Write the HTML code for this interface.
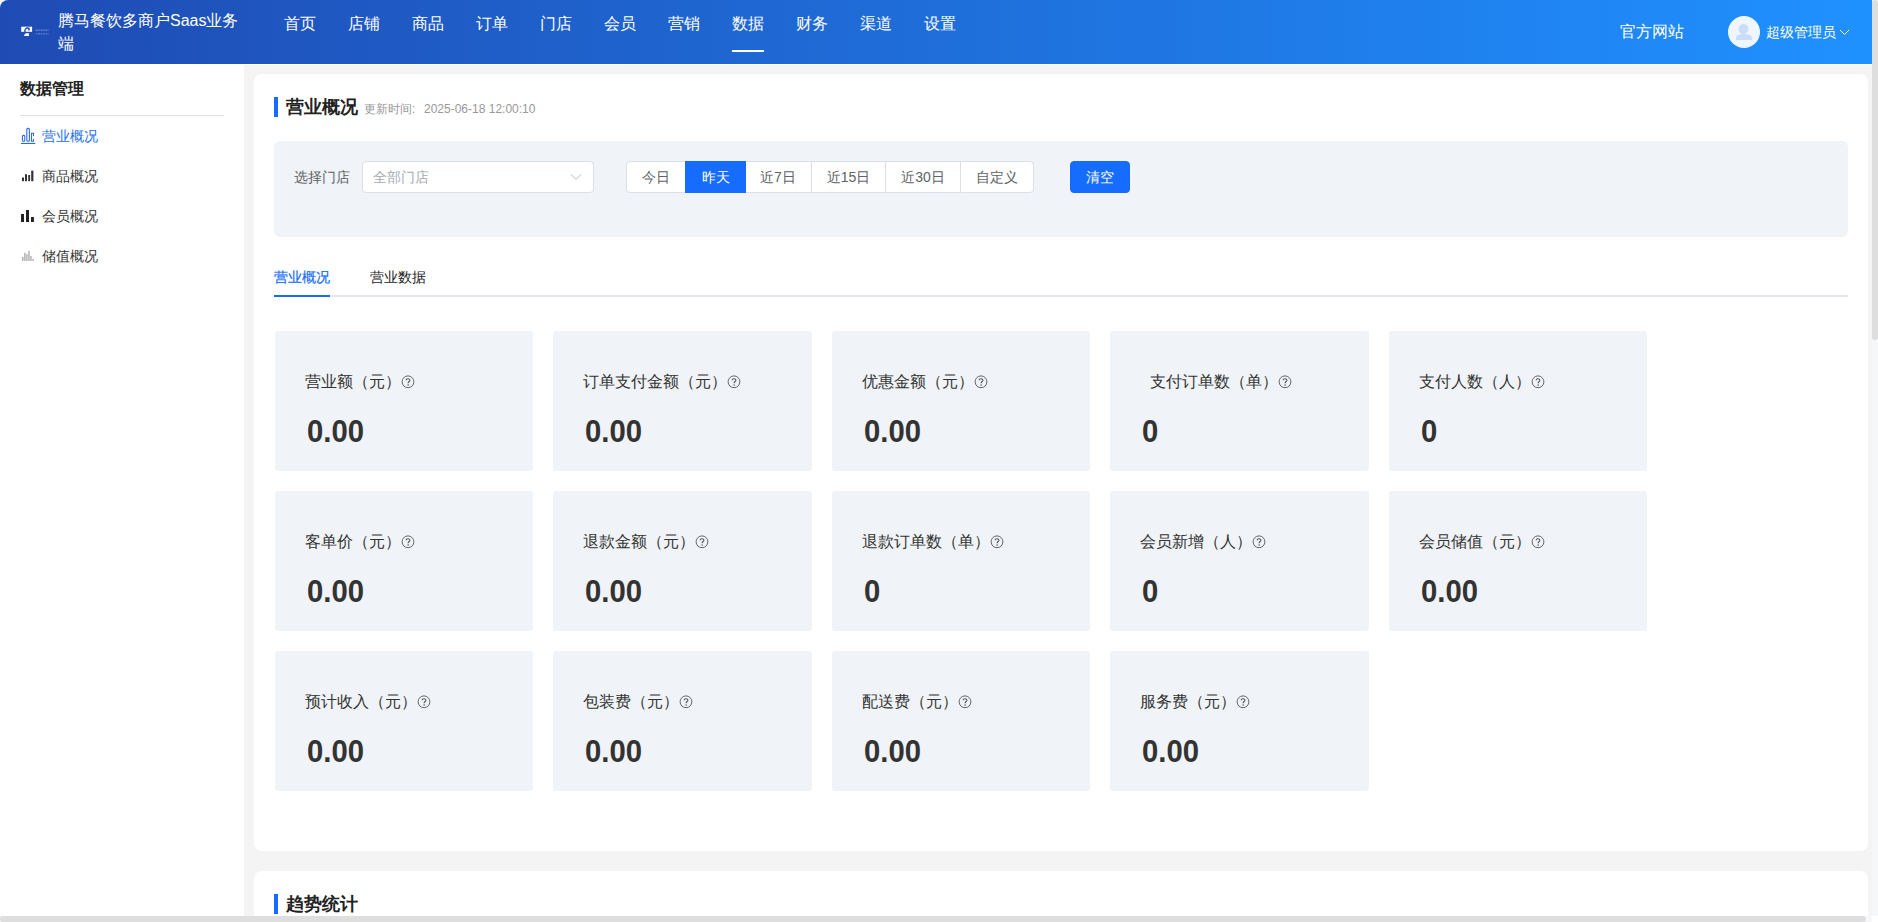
<!DOCTYPE html>
<html><head><meta charset="utf-8">
<style>
*{box-sizing:border-box;margin:0;padding:0}
html,body{width:1878px;height:922px;overflow:hidden;background:#fff;font-family:"Liberation Sans",sans-serif;color:#333}
.abs{position:absolute}
#hdr{position:absolute;left:0;top:0;width:1872px;height:64px;border-top-left-radius:8px;background:linear-gradient(to right,#1f4bb4,#1f91ff)}
#hdr .t{position:absolute;color:#fff;font-size:16px;line-height:16px;white-space:nowrap}
.nav{position:absolute;top:16px;color:#fff;font-size:16px;line-height:16px;white-space:nowrap}
#side{position:absolute;left:0;top:64px;width:244px;height:852px;background:#fff}
#gray{position:absolute;left:244px;top:65px;width:1628px;height:851px;background:#f4f4f4}
.panel{position:absolute;left:254px;width:1614px;background:#fff;border-radius:8px}
.menu{position:absolute;left:42px;font-size:14px;line-height:14px;color:#333;white-space:nowrap}
.card{position:absolute;width:258px;height:140px;background:#f0f3f7;border-radius:3px}
.card .l{position:absolute;left:30px;top:43px;font-size:16px;line-height:16px;color:#333;white-space:nowrap}
.card .v{position:absolute;left:31.5px;top:84px;font-size:32px;line-height:32px;font-weight:bold;color:#333;white-space:nowrap;transform:scaleX(0.915);transform-origin:0 0}
.q{display:inline-block;vertical-align:top;width:14px;height:16px;position:relative}
.q svg{position:absolute;left:0;top:1px}
.btn{position:absolute;top:161px;height:32px;font-size:14px;line-height:30px;color:#606266;text-align:center;border:1px solid #dcdfe6;background:#fff;white-space:nowrap}
</style></head><body>
<div id="hdr">
  <svg class="abs" style="left:20px;top:25px" width="30" height="12" viewBox="0 0 30 12">
    <rect x="1.2" y="1.7" width="10.9" height="5.1" fill="#fff"/>
    <path d="M5 7.5 C4.2 4.2 6.3 2.6 8.2 3 C9.4 3.3 9.6 4.7 8.4 5.4" stroke="#1f4bb4" stroke-width="1.4" fill="none"/>
    <path d="M3.2 1.8 L4.6 1.8 L3.6 5.5 L2.4 5.5 Z" fill="#1f4bb4" opacity=".0"/>
    <path d="M5.5 8.3 L9 8.3 L9 10.9 L4 10.9 L4 10.4 Z" fill="#fff"/>
    <path d="M15.6 5.3 H28.5" stroke="#fff" stroke-width="1.6" stroke-dasharray="2 .6 1.5 .8" opacity=".3"/>
    <path d="M16 8.7 H28.5" stroke="#fff" stroke-width="1.4" stroke-dasharray="1.4 .6 2 .7" opacity=".25"/>
  </svg>
  <div class="t" style="left:58px;top:13px">腾马餐饮多商户Saas业务</div>
  <div class="t" style="left:58px;top:36px">端</div>
  <div class="nav" style="left:284px">首页</div>
  <div class="nav" style="left:348px">店铺</div>
  <div class="nav" style="left:412px">商品</div>
  <div class="nav" style="left:476px">订单</div>
  <div class="nav" style="left:540px">门店</div>
  <div class="nav" style="left:604px">会员</div>
  <div class="nav" style="left:668px">营销</div>
  <div class="nav" style="left:732px">数据</div>
  <div class="nav" style="left:796px">财务</div>
  <div class="nav" style="left:860px">渠道</div>
  <div class="nav" style="left:924px">设置</div>
  <div class="abs" style="left:732px;top:50px;width:32px;height:2px;background:#fff"></div>
  <div class="t" style="left:1620px;top:24px">官方网站</div>
  <div class="abs" style="left:1728px;top:16px;width:32px;height:32px;border-radius:50%;background:#f0f6ff;overflow:hidden">
    <svg width="32" height="32" viewBox="0 0 32 32"><circle cx="15.5" cy="13" r="5" fill="#c9ddfa"/><path d="M8 24 L8 22.5 C8 19 11 18 15.5 18 C20 18 24 19 24 22.5 L24 24 Z" fill="#c9ddfa"/></svg>
  </div>
  <div class="t" style="left:1766px;top:25px;font-size:14px;line-height:14px">超级管理员</div>
  <svg class="abs" style="left:1839px;top:29px" width="11" height="7" viewBox="0 0 11 7"><path d="M1 1 L5.5 5.5 L10 1" stroke="#fff" stroke-width="1" fill="none"/></svg>
</div>

<div id="side">
  <div class="abs" style="left:20px;top:17px;font-size:16px;line-height:16px;font-weight:bold;color:#222">数据管理</div>
  <div class="abs" style="left:20px;top:51px;width:204px;height:1px;background:#dcdfe6"></div>
  <div class="menu" style="top:65px;color:#1a6cff">营业概况</div>
  <div class="menu" style="top:105px">商品概况</div>
  <div class="menu" style="top:145px">会员概况</div>
  <div class="menu" style="top:185px">储值概况</div>
</div>


<svg class="abs" style="left:0;top:120px;z-index:3" width="40" height="150" viewBox="0 120 40 150">
  <g fill="none" stroke="#2f6af5" stroke-width="1.1">
    <rect x="22.4" y="135.4" width="2.4" height="5.8" rx="1"/>
    <rect x="26.8" y="128.4" width="2.6" height="12.8" rx="1"/>
    <path d="M33.5 136 L33.5 133.2 L31.5 133.2 L31.5 141.2 L33.5 141.2 L33.5 139"/>
  </g>
  <rect x="21" y="142.9" width="14.3" height="1.1" fill="#1a6cff"/>
  <g fill="#333">
    <rect x="22" y="177.5" width="2" height="3.7"/>
    <rect x="25" y="174.2" width="2" height="7"/>
    <rect x="28.2" y="175" width="1.9" height="6.2"/>
    <rect x="31.2" y="170.6" width="2.2" height="10.6"/>
  </g>
  <g fill="#222">
    <rect x="21" y="214" width="3" height="8"/>
    <rect x="26" y="210" width="3" height="12"/>
    <rect x="31" y="217" width="2.9" height="5"/>
  </g>
  <g fill="#b5b5b5">
    <rect x="22" y="256.8" width="1.5" height="4.2"/>
    <rect x="24.1" y="252.9" width="1.5" height="8.1"/>
    <rect x="26.1" y="254.2" width="1.5" height="6.8"/>
    <rect x="28.2" y="250.8" width="1.5" height="10.2"/>
    <rect x="30.2" y="256" width="1.5" height="5"/>
    <rect x="32.3" y="258.8" width="1.5" height="2.2"/>
  </g>
</svg>
<div id="gray"></div>

<div class="panel" style="top:74px;height:777px">
</div>
<div class="panel" style="top:871px;height:200px">
</div>

<!-- panel 1 content (absolute page coords) -->
<div class="abs" style="left:274px;top:97px;width:4px;height:20px;background:#166cff"></div>
<div class="abs" style="left:286px;top:98px;font-size:18px;line-height:18px;font-weight:bold;color:#222;white-space:nowrap">营业概况</div>
<div class="abs" style="left:364px;top:103px;font-size:12px;line-height:12px;color:#999;white-space:nowrap">更新时间<span style="display:inline-block;width:12px">:</span>2025-06-18 12:00:10</div>

<div class="abs" style="left:274px;top:141px;width:1574px;height:96px;background:#f0f3f7;border-radius:6px"></div>
<div class="abs" style="left:294px;top:170px;font-size:14px;line-height:14px;color:#606266;white-space:nowrap">选择门店</div>
<div class="abs" style="left:362px;top:161px;width:232px;height:32px;background:#fff;border:1px solid #dcdfe6;border-radius:4px"></div>
<div class="abs" style="left:373px;top:170px;font-size:14px;line-height:14px;color:#a8abb2;white-space:nowrap">全部门店</div>
<svg class="abs" style="left:570px;top:173px" width="12" height="8" viewBox="0 0 12 8"><path d="M1 1.5 L6 6.5 L11 1.5" stroke="#b4b7bd" stroke-width="1" fill="none"/></svg>

<div class="btn" style="left:626px;width:60px;border-radius:4px 0 0 4px">今日</div>
<div class="btn" style="left:685px;width:61px;background:#166cff;border-color:#166cff;color:#fff;z-index:2">昨天</div>
<div class="btn" style="left:744px;width:68px">近7日</div>
<div class="btn" style="left:811px;width:75px">近15日</div>
<div class="btn" style="left:885px;width:76px">近30日</div>
<div class="btn" style="left:960px;width:74px;border-radius:0 4px 4px 0">自定义</div>
<div class="btn" style="left:1070px;width:60px;background:#166cff;border-color:#166cff;color:#fff;border-radius:4px">清空</div>

<div class="abs" style="left:274px;top:270px;font-size:14px;line-height:14px;color:#166cff;white-space:nowrap;-webkit-text-stroke:0.2px #166cff">营业概况</div>
<div class="abs" style="left:370px;top:270px;font-size:14px;line-height:14px;color:#222;white-space:nowrap">营业数据</div>
<div class="abs" style="left:274px;top:295px;width:1574px;height:2px;background:#e4e7ed"></div>
<div class="abs" style="left:274px;top:295px;width:56px;height:2px;background:#166cff"></div>

<div class="card" style="left:275px;top:331px"><div class="l">营业额（元）<span class="q"><svg width="14" height="14" viewBox="0 0 14 14"><circle cx="7" cy="6.8" r="5.9" fill="none" stroke="#666" stroke-width="1"/><path d="M5.1 5.2 C5.1 3.3 8.9 3.3 8.9 5.2 C8.9 6.5 7.1 6.6 7.1 8.3" fill="none" stroke="#555" stroke-width="1.1"/><circle cx="7.1" cy="10" r="0.75" fill="#555"/></svg></span></div><div class="v">0.00</div></div>
<div class="card" style="width:259px;left:553px;top:331px"><div class="l">订单支付金额（元）<span class="q"><svg width="14" height="14" viewBox="0 0 14 14"><circle cx="7" cy="6.8" r="5.9" fill="none" stroke="#666" stroke-width="1"/><path d="M5.1 5.2 C5.1 3.3 8.9 3.3 8.9 5.2 C8.9 6.5 7.1 6.6 7.1 8.3" fill="none" stroke="#555" stroke-width="1.1"/><circle cx="7.1" cy="10" r="0.75" fill="#555"/></svg></span></div><div class="v">0.00</div></div>
<div class="card" style="left:832px;top:331px"><div class="l">优惠金额（元）<span class="q"><svg width="14" height="14" viewBox="0 0 14 14"><circle cx="7" cy="6.8" r="5.9" fill="none" stroke="#666" stroke-width="1"/><path d="M5.1 5.2 C5.1 3.3 8.9 3.3 8.9 5.2 C8.9 6.5 7.1 6.6 7.1 8.3" fill="none" stroke="#555" stroke-width="1.1"/><circle cx="7.1" cy="10" r="0.75" fill="#555"/></svg></span></div><div class="v">0.00</div></div>
<div class="card" style="width:259px;left:1110px;top:331px"><div class="l" style="left:40px">支付订单数（单）<span class="q"><svg width="14" height="14" viewBox="0 0 14 14"><circle cx="7" cy="6.8" r="5.9" fill="none" stroke="#666" stroke-width="1"/><path d="M5.1 5.2 C5.1 3.3 8.9 3.3 8.9 5.2 C8.9 6.5 7.1 6.6 7.1 8.3" fill="none" stroke="#555" stroke-width="1.1"/><circle cx="7.1" cy="10" r="0.75" fill="#555"/></svg></span></div><div class="v">0</div></div>
<div class="card" style="left:1389px;top:331px"><div class="l">支付人数（人）<span class="q"><svg width="14" height="14" viewBox="0 0 14 14"><circle cx="7" cy="6.8" r="5.9" fill="none" stroke="#666" stroke-width="1"/><path d="M5.1 5.2 C5.1 3.3 8.9 3.3 8.9 5.2 C8.9 6.5 7.1 6.6 7.1 8.3" fill="none" stroke="#555" stroke-width="1.1"/><circle cx="7.1" cy="10" r="0.75" fill="#555"/></svg></span></div><div class="v">0</div></div>
<div class="card" style="left:275px;top:491px"><div class="l">客单价（元）<span class="q"><svg width="14" height="14" viewBox="0 0 14 14"><circle cx="7" cy="6.8" r="5.9" fill="none" stroke="#666" stroke-width="1"/><path d="M5.1 5.2 C5.1 3.3 8.9 3.3 8.9 5.2 C8.9 6.5 7.1 6.6 7.1 8.3" fill="none" stroke="#555" stroke-width="1.1"/><circle cx="7.1" cy="10" r="0.75" fill="#555"/></svg></span></div><div class="v">0.00</div></div>
<div class="card" style="width:259px;left:553px;top:491px"><div class="l">退款金额（元）<span class="q"><svg width="14" height="14" viewBox="0 0 14 14"><circle cx="7" cy="6.8" r="5.9" fill="none" stroke="#666" stroke-width="1"/><path d="M5.1 5.2 C5.1 3.3 8.9 3.3 8.9 5.2 C8.9 6.5 7.1 6.6 7.1 8.3" fill="none" stroke="#555" stroke-width="1.1"/><circle cx="7.1" cy="10" r="0.75" fill="#555"/></svg></span></div><div class="v">0.00</div></div>
<div class="card" style="left:832px;top:491px"><div class="l">退款订单数（单）<span class="q"><svg width="14" height="14" viewBox="0 0 14 14"><circle cx="7" cy="6.8" r="5.9" fill="none" stroke="#666" stroke-width="1"/><path d="M5.1 5.2 C5.1 3.3 8.9 3.3 8.9 5.2 C8.9 6.5 7.1 6.6 7.1 8.3" fill="none" stroke="#555" stroke-width="1.1"/><circle cx="7.1" cy="10" r="0.75" fill="#555"/></svg></span></div><div class="v">0</div></div>
<div class="card" style="width:259px;left:1110px;top:491px"><div class="l">会员新增（人）<span class="q"><svg width="14" height="14" viewBox="0 0 14 14"><circle cx="7" cy="6.8" r="5.9" fill="none" stroke="#666" stroke-width="1"/><path d="M5.1 5.2 C5.1 3.3 8.9 3.3 8.9 5.2 C8.9 6.5 7.1 6.6 7.1 8.3" fill="none" stroke="#555" stroke-width="1.1"/><circle cx="7.1" cy="10" r="0.75" fill="#555"/></svg></span></div><div class="v">0</div></div>
<div class="card" style="left:1389px;top:491px"><div class="l">会员储值（元）<span class="q"><svg width="14" height="14" viewBox="0 0 14 14"><circle cx="7" cy="6.8" r="5.9" fill="none" stroke="#666" stroke-width="1"/><path d="M5.1 5.2 C5.1 3.3 8.9 3.3 8.9 5.2 C8.9 6.5 7.1 6.6 7.1 8.3" fill="none" stroke="#555" stroke-width="1.1"/><circle cx="7.1" cy="10" r="0.75" fill="#555"/></svg></span></div><div class="v">0.00</div></div>
<div class="card" style="left:275px;top:651px"><div class="l">预计收入（元）<span class="q"><svg width="14" height="14" viewBox="0 0 14 14"><circle cx="7" cy="6.8" r="5.9" fill="none" stroke="#666" stroke-width="1"/><path d="M5.1 5.2 C5.1 3.3 8.9 3.3 8.9 5.2 C8.9 6.5 7.1 6.6 7.1 8.3" fill="none" stroke="#555" stroke-width="1.1"/><circle cx="7.1" cy="10" r="0.75" fill="#555"/></svg></span></div><div class="v">0.00</div></div>
<div class="card" style="width:259px;left:553px;top:651px"><div class="l">包装费（元）<span class="q"><svg width="14" height="14" viewBox="0 0 14 14"><circle cx="7" cy="6.8" r="5.9" fill="none" stroke="#666" stroke-width="1"/><path d="M5.1 5.2 C5.1 3.3 8.9 3.3 8.9 5.2 C8.9 6.5 7.1 6.6 7.1 8.3" fill="none" stroke="#555" stroke-width="1.1"/><circle cx="7.1" cy="10" r="0.75" fill="#555"/></svg></span></div><div class="v">0.00</div></div>
<div class="card" style="left:832px;top:651px"><div class="l">配送费（元）<span class="q"><svg width="14" height="14" viewBox="0 0 14 14"><circle cx="7" cy="6.8" r="5.9" fill="none" stroke="#666" stroke-width="1"/><path d="M5.1 5.2 C5.1 3.3 8.9 3.3 8.9 5.2 C8.9 6.5 7.1 6.6 7.1 8.3" fill="none" stroke="#555" stroke-width="1.1"/><circle cx="7.1" cy="10" r="0.75" fill="#555"/></svg></span></div><div class="v">0.00</div></div>
<div class="card" style="width:259px;left:1110px;top:651px"><div class="l">服务费（元）<span class="q"><svg width="14" height="14" viewBox="0 0 14 14"><circle cx="7" cy="6.8" r="5.9" fill="none" stroke="#666" stroke-width="1"/><path d="M5.1 5.2 C5.1 3.3 8.9 3.3 8.9 5.2 C8.9 6.5 7.1 6.6 7.1 8.3" fill="none" stroke="#555" stroke-width="1.1"/><circle cx="7.1" cy="10" r="0.75" fill="#555"/></svg></span></div><div class="v">0.00</div></div>

<div class="abs" style="left:274px;top:894px;width:4px;height:20px;background:#166cff"></div>
<div class="abs" style="left:286px;top:895px;font-size:18px;line-height:18px;font-weight:bold;color:#222;white-space:nowrap">趋势统计</div>

<!-- scrollbars -->
<div class="abs" style="left:1872px;top:0;width:6px;height:916px;background:#f6f7f9"></div>
<div class="abs" style="left:1872px;top:0;width:6px;height:340px;background:#dedede;border-radius:3px"></div>
<div class="abs" style="left:0;top:916px;width:1872px;height:6px;background:#f6f7f9"></div>
<div class="abs" style="left:0;top:916px;width:1866px;height:6px;background:#dedede;border-radius:3px"></div>
<div class="abs" style="left:1872px;top:916px;width:6px;height:6px;background:#fff"></div>
</body></html>
